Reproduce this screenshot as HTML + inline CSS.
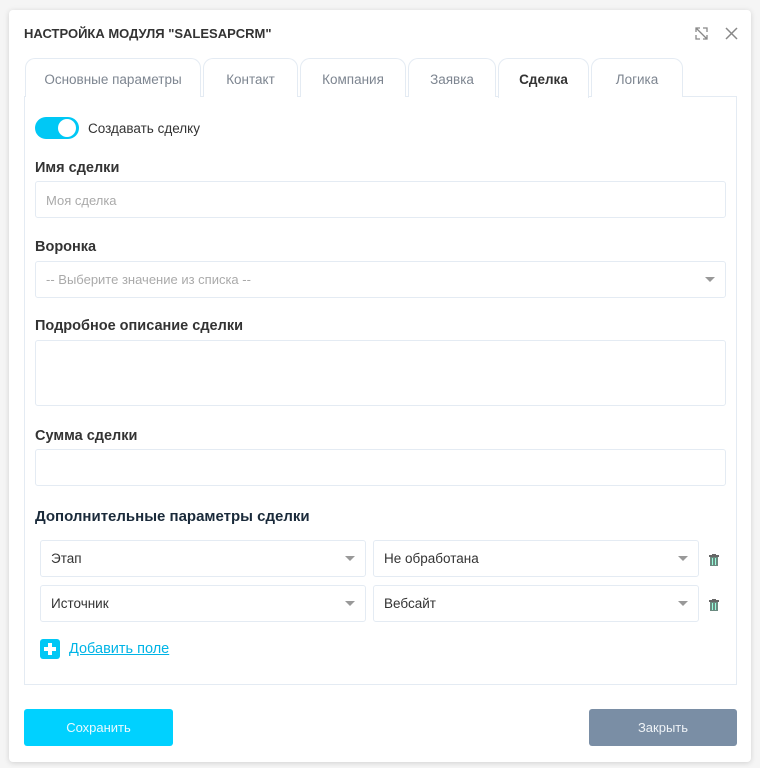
<!DOCTYPE html>
<html><head><meta charset="utf-8"><style>
*{box-sizing:border-box;margin:0;padding:0}
body{width:760px;height:768px;background:#f5f5f5;font-family:"Liberation Sans",sans-serif;position:relative;overflow:hidden}
.modal{position:absolute;left:9px;top:10px;width:742px;height:752px;background:#fff;border-radius:4px;box-shadow:0 1px 6px rgba(0,0,0,.15)}
.a{position:absolute}
.title{left:24px;top:26px;font-size:13px;font-weight:bold;color:#333}
.tab{position:absolute;top:58px;height:39px;border:1px solid #e4ebf3;border-bottom:none;border-radius:10px 10px 0 0;background:#fff;font-size:13.5px;color:#7d8590;text-align:center;line-height:42px}
.tab.act{color:#333;font-weight:bold;height:40px;z-index:2}
.panel{left:24px;top:96px;width:713px;height:589px;border:1px solid #e4ebf3}
.lbl{position:absolute;left:35px;font-size:14.5px;font-weight:bold;color:#333}
.inp{position:absolute;left:35px;width:691px;border:1px solid #e4ebf3;border-radius:3px;background:#fff;font-size:13px;color:#aaa;padding-left:10px}
.sel{position:absolute;height:37px;border:1px solid #e4ebf3;border-radius:3px;font-size:13.5px;color:#333;padding-left:10px;line-height:35px}
.car{position:absolute;right:10px;top:15px;width:0;height:0;border-left:5px solid transparent;border-right:5px solid transparent;border-top:5px solid #999}
.trash{position:absolute;width:10px;height:12px}
</style></head><body>
<div class="modal"></div>
<div class="a title">НАСТРОЙКА МОДУЛЯ "SALESAPCRM"</div>
<svg class="a" style="left:695px;top:27px" width="13" height="13" viewBox="0 0 13 13" fill="none" stroke="#888" stroke-width="1.3"><path d="M1 5V1h4M12 8v4H8M1 1l11 11M1 8v4h4M12 5V1H8"/></svg>
<svg class="a" style="left:725px;top:27px" width="13" height="13" viewBox="0 0 13 13" stroke="#888" stroke-width="1.5"><path d="M1 1l11 11M12 1L1 12"/></svg>
<div class="a panel"></div>
<div class="tab" style="left:25px;width:176px">Основные параметры</div>
<div class="tab" style="left:203px;width:95px">Контакт</div>
<div class="tab" style="left:300px;width:106px">Компания</div>
<div class="tab" style="left:408px;width:88px">Заявка</div>
<div class="tab act" style="left:498px;width:91px">Сделка</div>
<div class="tab" style="left:591px;width:92px">Логика</div>
<div class="a" style="left:35px;top:117px;width:44px;height:22px;border-radius:11px;background:#00c8f5"></div>
<div class="a" style="left:58px;top:119px;width:18px;height:18px;border-radius:50%;background:#fff"></div>
<div class="a" style="left:88px;top:121px;font-size:13.5px;color:#333">Создавать сделку</div>
<div class="lbl" style="top:160px">Имя сделки</div>
<div class="inp" style="top:181px;height:37px;line-height:37px">Моя сделка</div>
<div class="lbl" style="top:239px">Воронка</div>
<div class="inp" style="top:261px;height:37px;line-height:35px">-- Выберите значение из списка --<span class="car"></span></div>
<div class="lbl" style="top:318px">Подробное описание сделки</div>
<div class="inp" style="top:340px;height:66px"></div>
<div class="lbl" style="top:428px">Сумма сделки</div>
<div class="inp" style="top:449px;height:37px"></div>
<div class="a" style="left:35px;top:508px;font-size:15px;font-weight:bold;color:#1a2a3a">Дополнительные параметры сделки</div>
<div class="sel" style="left:40px;top:540px;width:326px">Этап<span class="car"></span></div>
<div class="sel" style="left:373px;top:540px;width:326px">Не обработана<span class="car"></span></div>
<div class="sel" style="left:40px;top:585px;width:326px">Источник<span class="car"></span></div>
<div class="sel" style="left:373px;top:585px;width:326px">Вебсайт<span class="car"></span></div>
<svg class="trash" style="left:709px;top:554px" viewBox="0 0 10 12"><rect x="0" y="1" width="10" height="2" fill="#666"/><rect x="3" y="0" width="4" height="2" fill="#666"/><rect x="1" y="3" width="8" height="9" fill="#6a8a80"/><path d="M3.5 4v7M6.5 4v7" stroke="#9fd" stroke-width="1"/></svg>
<svg class="trash" style="left:709px;top:599px" viewBox="0 0 10 12"><rect x="0" y="1" width="10" height="2" fill="#666"/><rect x="3" y="0" width="4" height="2" fill="#666"/><rect x="1" y="3" width="8" height="9" fill="#6a8a80"/><path d="M3.5 4v7M6.5 4v7" stroke="#9fd" stroke-width="1"/></svg>
<div class="a" style="left:40px;top:639px;width:20px;height:20px;border-radius:3px;background:#00c8f5"></div>
<div class="a" style="left:48px;top:643px;width:4px;height:12px;background:#fff"></div>
<div class="a" style="left:44px;top:647px;width:12px;height:4px;background:#fff"></div>
<div class="a" style="left:69px;top:641px;font-size:14.5px;color:#00b4e6;text-decoration:underline">Добавить поле</div>
<div class="a" style="left:24px;top:709px;width:149px;height:37px;border-radius:3px;background:#00d1ff;color:#e8faff;font-size:13px;text-align:center;line-height:37px">Сохранить</div>
<div class="a" style="left:589px;top:709px;width:148px;height:37px;border-radius:3px;background:#7a8ea5;color:#eef2f6;font-size:13px;text-align:center;line-height:37px">Закрыть</div>
</body></html>
